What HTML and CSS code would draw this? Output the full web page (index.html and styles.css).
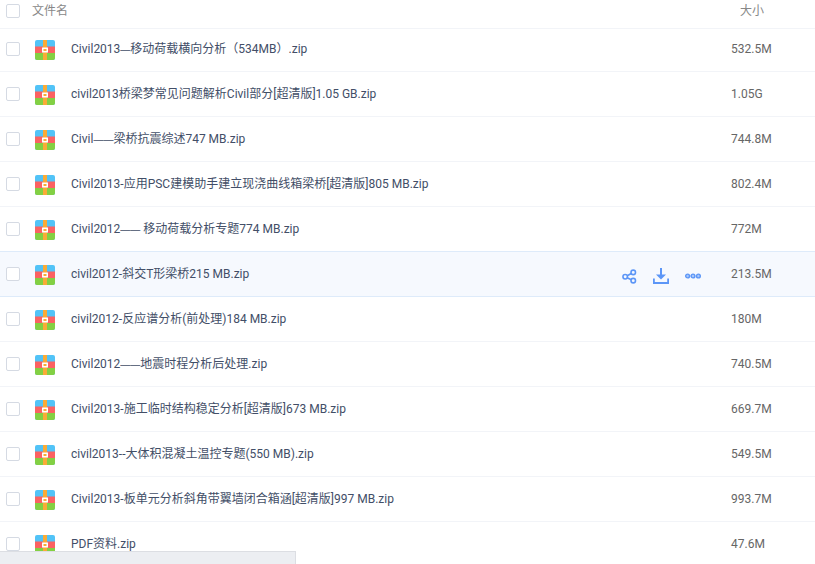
FILE: index.html
```html
<!DOCTYPE html>
<html lang="zh">
<head>
<meta charset="utf-8">
<title>文件列表</title>
<link rel="stylesheet" href="styles.css">
</head>
<body>
<svg class="defs" width="0" height="0" aria-hidden="true">
  <symbol id="zip" viewBox="0 0 20 20">
    <rect x="0" y="0" width="20" height="20" rx="2" fill="#52c3f7"/>
    <rect x="0" y="6.5" width="20" height="7" fill="#fb6262"/>
    <path d="M0 13h20v5a2 2 0 0 1-2 2H2a2 2 0 0 1-2-2z" fill="#83d043"/>
    <rect x="8" y="0" width="4" height="20" fill="#f9ab37"/>
    <rect x="7" y="7.5" width="6" height="5" fill="#fff"/>
    <rect x="8.5" y="9" width="3" height="2" fill="#f9ab37"/>
  </symbol>
</svg>
<main class="list">
  <header class="head">
    <span class="check"></span>
    <span class="head-name">文件名</span>
    <span class="head-size">大小</span>
  </header>
  <div class="row"><span class="check"></span><svg class="ficon"><use href="#zip"/></svg><span class="name">Civil2013<span class="dash">—</span>移动荷载横向分析（534MB）.zip</span><span class="size">532.5M</span></div>
  <div class="row"><span class="check"></span><svg class="ficon"><use href="#zip"/></svg><span class="name">civil2013桥梁梦常见问题解析Civil部分[超清版]1.05 GB.zip</span><span class="size">1.05G</span></div>
  <div class="row"><span class="check"></span><svg class="ficon"><use href="#zip"/></svg><span class="name">Civil<span class="dash">——</span>梁桥抗震综述747 MB.zip</span><span class="size">744.8M</span></div>
  <div class="row"><span class="check"></span><svg class="ficon"><use href="#zip"/></svg><span class="name">Civil2013-应用PSC建模助手建立现浇曲线箱梁桥[超清版]805 MB.zip</span><span class="size">802.4M</span></div>
  <div class="row"><span class="check"></span><svg class="ficon"><use href="#zip"/></svg><span class="name">Civil2012<span class="dash">——</span> 移动荷载分析专题774 MB.zip</span><span class="size">772M</span></div>
  <div class="row row-hover"><span class="check"></span><svg class="ficon"><use href="#zip"/></svg><span class="name">civil2012-斜交T形梁桥215 MB.zip</span>
    <span class="actions">
      <svg class="act act-share" viewBox="0 0 16 16" fill="none" stroke="#5c96f7" stroke-width="1.7"><circle cx="3.4" cy="8.3" r="2.4"/><circle cx="12" cy="3.6" r="2.4"/><circle cx="12" cy="12.4" r="2.4"/><path d="M5.6 7.2l4.3-2.4M5.6 9.4l4.3 2"/></svg>
      <svg class="act" viewBox="0 0 16 16" fill="#5c96f7"><path d="M7 0h2v6.5h4L8 11.6 3 6.5h4z"/><path d="M0 10.5h1.8v3.4h12.4v-3.4H16V16H0z"/></svg>
      <svg class="act" viewBox="0 0 16 16" fill="#a9c8fb" stroke="#5c96f7" stroke-width="1.4"><circle cx="2.6" cy="8" r="1.9"/><circle cx="8" cy="8" r="1.9"/><circle cx="13.4" cy="8" r="1.9"/></svg>
    </span>
    <span class="size">213.5M</span></div>
  <div class="row"><span class="check"></span><svg class="ficon"><use href="#zip"/></svg><span class="name">civil2012-反应谱分析(前处理)184 MB.zip</span><span class="size">180M</span></div>
  <div class="row"><span class="check"></span><svg class="ficon"><use href="#zip"/></svg><span class="name">Civil2012<span class="dash">——</span>地震时程分析后处理.zip</span><span class="size">740.5M</span></div>
  <div class="row"><span class="check"></span><svg class="ficon"><use href="#zip"/></svg><span class="name">Civil2013-施工临时结构稳定分析[超清版]673 MB.zip</span><span class="size">669.7M</span></div>
  <div class="row"><span class="check"></span><svg class="ficon"><use href="#zip"/></svg><span class="name">civil2013--大体积混凝土温控专题(550 MB).zip</span><span class="size">549.5M</span></div>
  <div class="row"><span class="check"></span><svg class="ficon"><use href="#zip"/></svg><span class="name">Civil2013-板单元分析斜角带翼墙闭合箱涵[超清版]997 MB.zip</span><span class="size">993.7M</span></div>
  <div class="row"><span class="check"></span><svg class="ficon"><use href="#zip"/></svg><span class="name">PDF资料.zip</span><span class="size">47.6M</span></div>
</main>
<div class="bottom-bar"></div>
</body>
</html>
```
FILE: styles.css
```css
html, body {
  margin: 0;
  height: 100%;
  overflow: hidden;
  background: #fff;
}
body {
  font-family: "Roboto", "Noto Sans CJK SC", sans-serif;
  font-size: 12px;
  color: #424e67;
  position: relative;
}
.defs { position: absolute; }
.head {
  height: 24px;
  display: flex;
  padding: 4px 0 0 6px;
  align-items: flex-start;
  border-bottom: 1px solid #f2f4f8;
  color: #888;
}
.check {
  flex: none;
  box-sizing: border-box;
  width: 14px;
  height: 14px;
  border: 1px solid #d5dae3;
  border-radius: 2px;
  background: #fff;
  margin-top: 2px;
}
.head .check { margin-top: 0; }
.head-name { margin-left: 12px; line-height: 14px; }
.head-size { margin-left: 672px; line-height: 14px; }
.row {
  box-sizing: border-box;
  height: 45px;
  display: flex;
  align-items: flex-start;
  padding: 13px 0 0 6px;
  border-bottom: 1px solid #f2f4f8;
}
.row:nth-child(2) { height: 43px; padding-top: 11px; }
.ficon { flex: none; width: 20px; height: 20px; margin: 0 0 0 15px; }
.name { margin-left: 16px; line-height: 18px; white-space: nowrap; }
.dash { font-family: "Liberation Sans", sans-serif; font-size: 10px; }
.size { margin-left: auto; width: 84px; flex: none; line-height: 18px; color: #666; }
.row-hover { background: #f6f9fe; border-bottom-color: #deebfa; }
.row:nth-child(6) { border-bottom-color: #deebfa; }
.actions { position: absolute; left: 622px; margin-top: 2px; display: flex; gap: 16px; align-items: center; height: 18px; }
.act { width: 16px; height: 16px; }
.act-share { width: 15px; height: 15px; }
.bottom-bar {
  position: absolute;
  left: 0;
  bottom: 0;
  width: 295px;
  height: 12px;
  background: #eceef2;
  border-top: 1px solid #dcdee3;
  border-right: 1px solid #dcdee3;
}
```
